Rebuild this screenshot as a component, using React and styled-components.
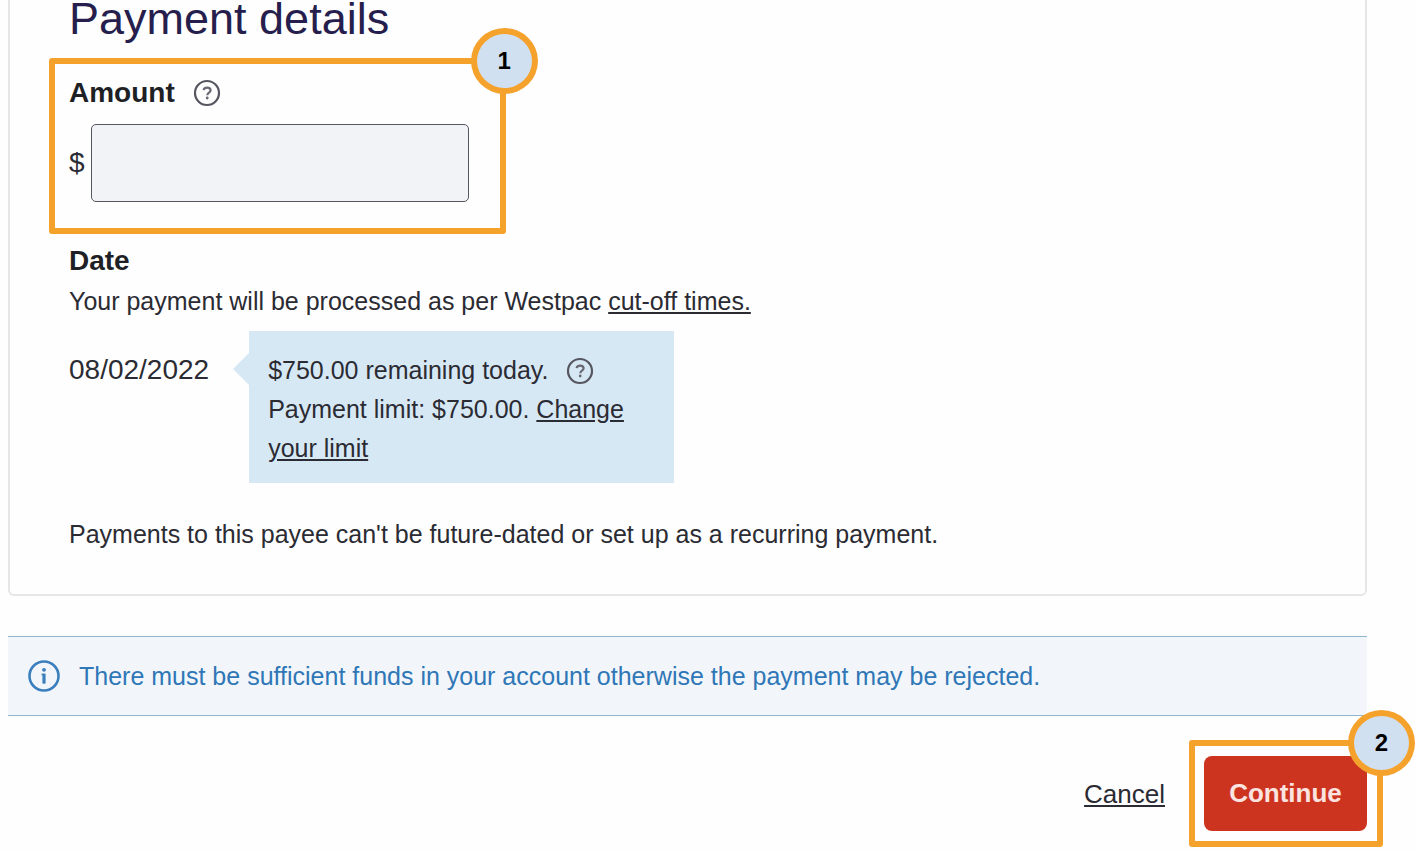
import React, { useState } from 'react'
import styled, { createGlobalStyle } from 'styled-components'

const HelpIcon = () => (
    <svg width="28" height="28" viewBox="0 0 28 28" fill="none" aria-hidden="true">
        <circle cx="14" cy="14" r="12" stroke="#55565f" strokeWidth="2.2" />
        <path
            d="M10.600 11.200c.2-1.700 1.500-2.600 3.500-2.600s3.500 1 3.500 2.700c0 2.400-3.300 2.300-3.300 4.900"
            stroke="#686973"
            strokeWidth="2.200"
        />
        <circle cx="14.200" cy="19" r="1.400" fill="#686973" />
    </svg>
)

const InfoIcon = () => (
    <svg width="32" height="32" viewBox="0 0 32 32" fill="none" aria-hidden="true">
        <circle cx="16" cy="16" r="14.500" stroke="#3c7fbd" strokeWidth="2.600" />
        <circle cx="16" cy="9.800" r="1.900" fill="#3c7fbd" />
        <path d="M13.500 14.500h2.500v9" stroke="#3c7fbd" strokeWidth="1.600" />
        <path d="M16 13.700v9.800" stroke="#3c7fbd" strokeWidth="3.200" />
    </svg>
)

const App = () => {
    const [amount, setAmount] = useState('')

    return (
        <Page>
            <GlobalStyle />
            <Panel>
                <Title>Payment details</Title>

                <AmountStep>
                    <Badge>1</Badge>
                    <LabelRow>
                        <Label htmlFor="amount">Amount</Label>
                        <HelpButton type="button" aria-label="Help with amount">
                            <HelpIcon />
                        </HelpButton>
                    </LabelRow>
                    <InputRow>
                        <Value>$</Value>
                        <AmountInput
                            id="amount"
                            type="text"
                            value={amount}
                            onChange={(e) => setAmount(e.target.value)}
                        />
                    </InputRow>
                </AmountStep>

                <DateHeading>Date</DateHeading>
                <Text>
                    Your payment will be processed as per Westpac <Link href="#cut-off">cut-off times.</Link>
                </Text>

                <DateRow>
                    <DateValue>08/02/2022</DateValue>
                    <LimitBox>
                        <LimitLine>
                            $750.00 remaining today.
                            <HelpButton type="button" aria-label="Help with remaining limit">
                                <HelpIcon />
                            </HelpButton>
                        </LimitLine>
                        <LimitText>
                            Payment limit: $750.00. <Link href="#limit">Change your limit</Link>
                        </LimitText>
                    </LimitBox>
                </DateRow>

                <Text>Payments to this payee can't be future-dated or set up as a recurring payment.</Text>
            </Panel>

            <Notice>
                <InfoIcon />
                <Text>
                    There must be sufficient funds in your account otherwise the payment may be rejected.
                </Text>
            </Notice>

            <Actions>
                <CancelLink href="#cancel">Cancel</CancelLink>
                <ContinueStep>
                    <Badge>2</Badge>
                    <ContinueButton type="button">Continue</ContinueButton>
                </ContinueStep>
            </Actions>
        </Page>
    )
}

export default App

const GlobalStyle = createGlobalStyle`
* {
    box-sizing: border-box;
}
body {
    margin: 0;
    background: #fefefe;
    font-family: "Liberation Sans", Arial, sans-serif;
    color: #2b2b33;
}
`

const Page = styled.main`
    padding: 0 49px 5px 8px;
`

const Panel = styled.section`
    padding: 0 60px 41px 59px;
    border: 2px solid #e6e6e8;
    border-top: 0;
    border-radius: 0 0 6px 6px;
`

const Title = styled.h1`
    margin: 0 0 20px;
    font-size: 45px;
    line-height: 38px;
    font-weight: 400;
    color: #261f4d;
`

const Step = styled.div`
    position: relative;
    border: 6px solid #f5a22d;
    border-radius: 3px;
`

const AmountStep = styled(Step)`
    width: fit-content;
    max-width: 100%;
    margin-left: -20px;
    padding: 12px 31px 26px 14px;
`

const Badge = styled.span`
    position: absolute;
    top: -36px;
    right: -38px;
    display: flex;
    align-items: center;
    justify-content: center;
    width: 67px;
    height: 66px;
    border: 6px solid #f5a22d;
    border-radius: 50%;
    background: #d1e0f1;
    font-size: 24px;
    line-height: 28px;
    font-weight: 700;
    color: #000;
`

const LabelRow = styled.div`
    display: flex;
    align-items: center;
    margin-bottom: 14px;
`

const Label = styled.label`
    font-size: 28px;
    line-height: 34px;
    font-weight: 700;
    color: #1f1f26;
`

const HelpButton = styled.button`
    display: inline-flex;
    margin: 0 0 0 18px;
    padding: 0;
    border: 0;
    background: none;
    cursor: pointer;
`

const InputRow = styled.div`
    display: flex;
    align-items: center;
    gap: 6px;
`

const Value = styled.span`
    font-size: 28px;
    line-height: 38px;
`

const AmountInput = styled.input`
    width: 378px;
    min-width: 0;
    height: 78px;
    padding: 0 18px;
    border: 1px solid #55565f;
    border-radius: 5px;
    background: #f2f3f6;
    font: inherit;
    font-size: 28px;
    color: inherit;
`

const DateHeading = styled.h2`
    margin: 10px 0 4px;
    font-size: 28px;
    line-height: 34px;
    font-weight: 700;
    color: #1f1f26;
`

const Text = styled.p`
    margin: 0;
    font-size: 25px;
    line-height: 38px;
`

const Link = styled.a`
    color: inherit;
    text-decoration: underline;
`

const DateRow = styled.div`
    display: flex;
    align-items: flex-start;
    gap: 40px;
    margin: 11px 0 32px;
`

const DateValue = styled(Value)`
    padding-top: 20px;
`

const LimitBox = styled.div`
    position: relative;
    width: 425px;
    padding: 20px 19px 15px;
    background: #d7e8f5;

    &::before {
        content: '';
        position: absolute;
        top: 22px;
        left: -16px;
        border: solid transparent;
        border-width: 16px 16px 16px 0;
        border-right-color: #d7e8f5;
    }
`

const LimitLine = styled.div`
    display: flex;
    align-items: center;
    font-size: 25px;
    line-height: 39px;
`

const LimitText = styled(Text)`
    line-height: 39px;
`

const Notice = styled.div`
    display: flex;
    align-items: center;
    gap: 19px;
    min-height: 80px;
    margin-top: 40px;
    padding: 0 20px;
    border: solid #94b6cd;
    border-width: 1px 0;
    background: #f2f6fb;
    color: #2f77b6;

    svg {
        flex-shrink: 0;
    }
`

const Actions = styled.div`
    display: flex;
    align-items: center;
    justify-content: flex-end;
    gap: 24px;
    margin: 24px -16px 0 0;
`

const CancelLink = styled(Link)`
    font-size: 26px;
    line-height: 38px;
`

const ContinueStep = styled(Step)`
    padding: 10px 10px 10px 9px;
`

const ContinueButton = styled.button`
    display: block;
    min-width: 163px;
    height: 75px;
    padding: 0 24px;
    border: 0;
    border-radius: 8px;
    background: #cd3420;
    font: inherit;
    font-size: 26px;
    font-weight: 700;
    color: #fbe4e0;
    cursor: pointer;
`
